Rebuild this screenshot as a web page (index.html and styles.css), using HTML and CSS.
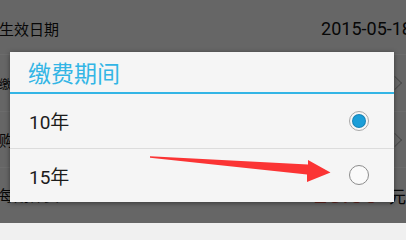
FILE: index.html
```html
<!DOCTYPE html>
<html lang="zh">
<head>
<meta charset="utf-8">
<link rel="stylesheet" href="styles.css">
</head>
<body>
<div class="screen">
  <div class="page">
    <div class="row r1"><span class="label">生效日期</span><span class="value">2015-05-18</span></div>
    <div class="row r2"><span class="label small">缴费期间</span><span class="chev"></span></div>
    <div class="row r3"><span class="label">购买份数</span><span class="chev"></span></div>
    <div class="row r4"><span class="label">每期保费</span><span class="value"><span class="money">25.00</span> 元</span></div>
  </div>
  <div class="overlay"></div>
  <div class="dialog">
    <div class="title">缴费期间</div>
    <div class="option"><span class="opt-text">10年</span><span class="radio checked"></span></div>
    <div class="option"><span class="opt-text">15年</span><span class="radio"></span></div>
  </div>
  <svg class="arrow" width="406" height="223" viewBox="0 0 406 223">
    <polygon points="150,156.3 308,164.5 308,160 330.5,172.5 307,182 307,174.5 150,157.8" fill="#fb3434"/>
  </svg>
</div>
</body>
</html>
```
FILE: styles.css
```css
* { box-sizing: border-box; }
html, body { margin: 0; padding: 0; }
body {
  width: 406px;
  height: 223px;
  overflow: hidden;
  font-family: Roboto, "Noto Sans CJK SC", sans-serif;
  background: #f0f0f0;
}
.screen {
  position: relative;
  width: 406px;
  height: 223px;
  overflow: hidden;
}
.page {
  display: flex;
  flex-direction: column;
  width: 406px;
}
.row {
  display: flex;
  align-items: center;
  justify-content: space-between;
  border-bottom: 1px solid #ffffff;
  color: #111;
  font-size: 15px;
}
.r1 { height: 55px; padding-top: 3px; }
.r2 { height: 57px; }
.r3 { height: 56px; }
.r4 { height: 55px; border-bottom: none; padding-bottom: 2px; }
.label { margin-left: -1px; }
.label.small { font-size: 12px; }
.value {
  font-size: 18px;
  margin-right: -6px;
  white-space: nowrap;
}
.r4 .value { margin-right: 0; font-size: 17px; }
.money {
  color: #ee5a4c;
  font-size: 24px;
  letter-spacing: 1px;
  margin-right: 6px;
}
.chev {
  width: 10px;
  height: 10px;
  border-top: 1.5px solid #b0b0b0;
  border-right: 1.5px solid #b0b0b0;
  transform: rotate(45deg);
  margin-right: 6px;
}
.overlay {
  position: absolute;
  inset: 0;
  background: rgba(0, 0, 0, 0.575);
}
.dialog {
  position: absolute;
  left: 10px;
  top: 52px;
  width: 384px;
  height: 150px;
  background: #f5f5f5;
  box-shadow: 0 1px 5px rgba(0, 0, 0, 0.45);
  display: flex;
  flex-direction: column;
}
.title {
  height: 42px;
  border-bottom: 2px solid #33b5e5;
  color: #33b5e5;
  font-family: "Noto Sans CJK SC", sans-serif;
  font-size: 23px;
  line-height: 40px;
  padding-left: 18px;
}
.option {
  flex: 1;
  display: flex;
  align-items: center;
  justify-content: space-between;
  padding-left: 19px;
  padding-right: 25px;
  color: #1c1c1c;
  font-size: 19px;
}
.option + .option { border-top: 1px solid #dcdcdc; }
.radio {
  width: 20px;
  height: 20px;
  border-radius: 50%;
  border: 1.3px solid #8c8c8c;
  background: #fafafa;
  position: relative;
}
.radio.checked {
  border: 1px solid #a8a8a8;
  background: #f7f7f7;
}
.radio.checked::after {
  content: "";
  position: absolute;
  left: 3px;
  top: 3px;
  width: 12px;
  height: 12px;
  border-radius: 50%;
  background: #1b9ed8;
  box-shadow: 0 0 0 1px #1683b6;
}
.arrow {
  position: absolute;
  left: 0;
  top: 0;
  pointer-events: none;
}
```
